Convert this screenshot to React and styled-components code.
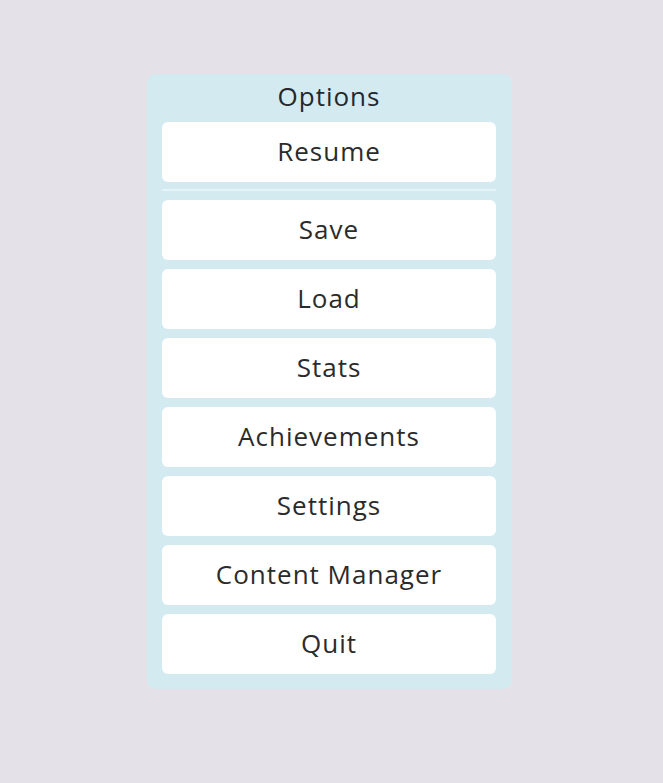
import styled, { createGlobalStyle } from "styled-components";

const GlobalStyle = createGlobalStyle`
  html, body {
    margin: 0;
    padding: 0;
    background: #e4e1e9;
  }
  body {
    font-family: "Open Sans", "Lato", sans-serif;
  }
`;

const Screen = styled.div`
  width: 663px;
  height: 783px;
  display: flex;
  justify-content: flex-start;
  align-items: flex-start;
  padding: 74px 0 0 147px;
  box-sizing: border-box;
`;

const Panel = styled.div`
  width: 365px;
  box-sizing: border-box;
  background: #d3ebf0;
  border-radius: 9px;
  padding: 0 16px 15px 15px;
  display: flex;
  flex-direction: column;
`;

const Title = styled.div`
  height: 48px;
  display: flex;
  align-items: center;
  justify-content: center;
  font-size: 26px;
  letter-spacing: 1px;
  color: #22292e;
  padding-bottom: 4px;
  box-sizing: border-box;
`;

const Separator = styled.div`
  height: 2px;
  margin: 7px 0 9px;
  background: #e6f4f7;
`;

const List = styled.div`
  display: flex;
  flex-direction: column;
  gap: 9px;
`;

const MenuButton = styled.button`
  height: 60px;
  width: 100%;
  border: none;
  border-radius: 6px;
  background: #ffffff;
  font-family: "Open Sans", "Lato", sans-serif;
  font-size: 26px;
  letter-spacing: 1px;
  color: #2b2b2b;
  cursor: pointer;
  padding: 0 0 3px;
`;

const items = ["Save", "Load", "Stats", "Achievements", "Settings", "Content Manager", "Quit"];

export default function App() {
  return (
    <>
      <GlobalStyle />
      <Screen>
        <Panel>
          <Title>Options</Title>
          <MenuButton>Resume</MenuButton>
          <Separator />
          <List>
            {items.map((label) => (
              <MenuButton key={label}>{label}</MenuButton>
            ))}
          </List>
        </Panel>
      </Screen>
    </>
  );
}
